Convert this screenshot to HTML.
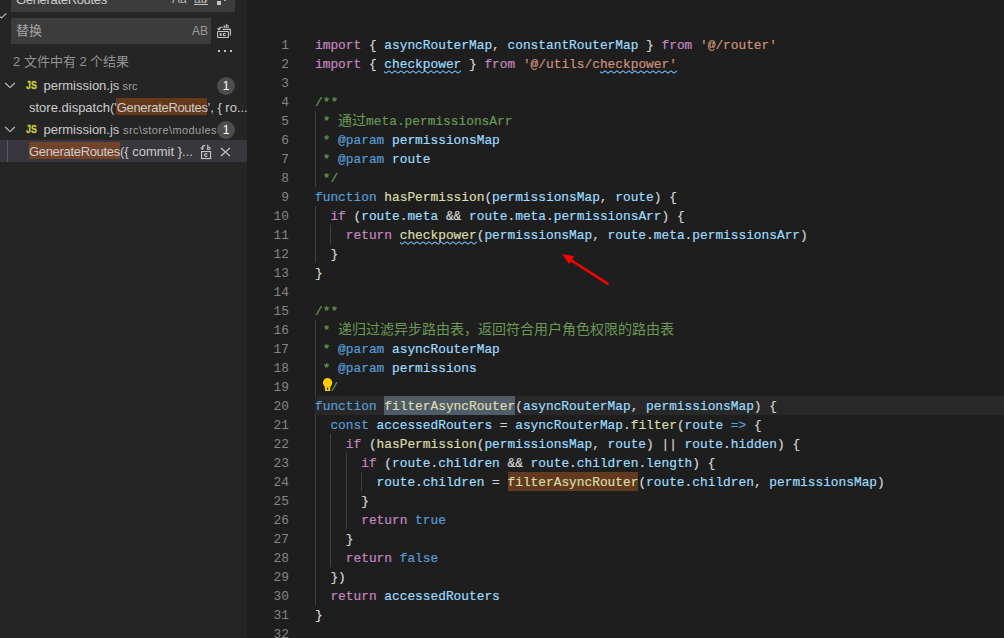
<!DOCTYPE html>
<html lang="zh-CN"><head><meta charset="utf-8"><style>
*{margin:0;padding:0;box-sizing:border-box}
html,body{width:1004px;height:638px;overflow:hidden;background:#1e1e1e}
body{position:relative;font-family:"Liberation Sans",sans-serif}
#side{position:absolute;left:0;top:0;width:247px;height:638px;background:#252526;overflow:hidden}
.ab{position:absolute}
.code{position:absolute;left:0;top:0;width:1004px;height:638px}
.ln{position:absolute;left:247px;width:42px;text-align:right;color:#858585;font-family:"Liberation Mono",monospace;font-size:12.83px;line-height:19px;height:19px;white-space:pre}
.cl{position:absolute;left:315px;-webkit-text-stroke-width:0.2px;font-family:"Liberation Mono",monospace;font-size:12.83px;line-height:19px;height:19px;white-space:pre}
.ig{position:absolute;width:1px;background:#404040;height:19px}
.cjk{font-size:14px;-webkit-text-stroke-width:0}
.hl2,.hl4{letter-spacing:-0.32px}
.st{font-size:13px;color:#cccccc;white-space:pre;line-height:22px;height:22px}
</style></head><body>

<div class="code">
<div class="ab" style="left:315px;top:396px;width:689px;height:19px;background:#282828"></div>
<div class="ab" style="left:384.30px;top:396px;width:130.90px;height:19px;background:#515c6a"></div>
<div class="ab" style="left:507.50px;top:472px;width:130.90px;height:19px;background:#613a1f"></div>
<div class="ig" style="left:315px;top:111px"></div>
<div class="ig" style="left:315px;top:130px"></div>
<div class="ig" style="left:315px;top:149px"></div>
<div class="ig" style="left:315px;top:168px"></div>
<div class="ig" style="left:315px;top:206px"></div>
<div class="ig" style="left:315px;top:225px"></div>
<div class="ig" style="left:315px;top:244px"></div>
<div class="ig" style="left:330px;top:225px"></div>
<div class="ig" style="left:315px;top:320px"></div>
<div class="ig" style="left:315px;top:339px"></div>
<div class="ig" style="left:315px;top:358px"></div>
<div class="ig" style="left:315px;top:377px"></div>
<div class="ig" style="left:315px;top:415px"></div>
<div class="ig" style="left:315px;top:434px"></div>
<div class="ig" style="left:315px;top:453px"></div>
<div class="ig" style="left:315px;top:472px"></div>
<div class="ig" style="left:315px;top:491px"></div>
<div class="ig" style="left:315px;top:510px"></div>
<div class="ig" style="left:315px;top:529px"></div>
<div class="ig" style="left:315px;top:548px"></div>
<div class="ig" style="left:315px;top:567px"></div>
<div class="ig" style="left:315px;top:586px"></div>
<div class="ig" style="left:330px;top:434px"></div>
<div class="ig" style="left:330px;top:453px"></div>
<div class="ig" style="left:330px;top:472px"></div>
<div class="ig" style="left:330px;top:491px"></div>
<div class="ig" style="left:330px;top:510px"></div>
<div class="ig" style="left:330px;top:529px"></div>
<div class="ig" style="left:330px;top:548px"></div>
<div class="ig" style="left:346px;top:453px"></div>
<div class="ig" style="left:346px;top:472px"></div>
<div class="ig" style="left:346px;top:491px"></div>
<div class="ig" style="left:346px;top:510px"></div>
<div class="ig" style="left:361px;top:472px"></div>
<div class="ln" style="top:36px">1</div>
<div class="ln" style="top:55px">2</div>
<div class="ln" style="top:74px">3</div>
<div class="ln" style="top:93px">4</div>
<div class="ln" style="top:112px">5</div>
<div class="ln" style="top:131px">6</div>
<div class="ln" style="top:150px">7</div>
<div class="ln" style="top:169px">8</div>
<div class="ln" style="top:188px">9</div>
<div class="ln" style="top:207px">10</div>
<div class="ln" style="top:226px">11</div>
<div class="ln" style="top:245px">12</div>
<div class="ln" style="top:264px">13</div>
<div class="ln" style="top:283px">14</div>
<div class="ln" style="top:302px">15</div>
<div class="ln" style="top:321px">16</div>
<div class="ln" style="top:340px">17</div>
<div class="ln" style="top:359px">18</div>
<div class="ln" style="top:378px">19</div>
<div class="ln" style="top:397px">20</div>
<div class="ln" style="top:416px">21</div>
<div class="ln" style="top:435px">22</div>
<div class="ln" style="top:454px">23</div>
<div class="ln" style="top:473px">24</div>
<div class="ln" style="top:492px">25</div>
<div class="ln" style="top:511px">26</div>
<div class="ln" style="top:530px">27</div>
<div class="ln" style="top:549px">28</div>
<div class="ln" style="top:568px">29</div>
<div class="ln" style="top:587px">30</div>
<div class="ln" style="top:606px">31</div>
<div class="ln" style="top:625px">32</div>
<div class="cl" style="top:36px"><span style="color:#C586C0">import</span><span style="color:#D4D4D4"> { </span><span style="color:#9CDCFE">asyncRouterMap</span><span style="color:#D4D4D4">, </span><span style="color:#9CDCFE">constantRouterMap</span><span style="color:#D4D4D4"> } </span><span style="color:#C586C0">from</span><span style="color:#D4D4D4"> </span><span style="color:#CE9178">&#x27;@/router&#x27;</span></div>
<div class="cl" style="top:55px"><span style="color:#C586C0">import</span><span style="color:#D4D4D4"> { </span><span style="color:#9CDCFE">checkpower</span><span style="color:#D4D4D4"> } </span><span style="color:#C586C0">from</span><span style="color:#D4D4D4"> </span><span style="color:#CE9178">&#x27;@/utils/checkpower&#x27;</span></div>
<div class="cl" style="top:93px"><span style="color:#6A9955">/**</span></div>
<div class="cl" style="top:112px"><span style="color:#6A9955"> * </span><span class="cjk" style="color:#6A9955">通过</span><span style="color:#6A9955">meta.permissionsArr</span></div>
<div class="cl" style="top:131px"><span style="color:#6A9955"> * </span><span style="color:#569CD6">@param</span><span style="color:#6A9955"> </span><span style="color:#9CDCFE">permissionsMap</span></div>
<div class="cl" style="top:150px"><span style="color:#6A9955"> * </span><span style="color:#569CD6">@param</span><span style="color:#6A9955"> </span><span style="color:#9CDCFE">route</span></div>
<div class="cl" style="top:169px"><span style="color:#6A9955"> */</span></div>
<div class="cl" style="top:188px"><span style="color:#569CD6">function</span><span style="color:#D4D4D4"> </span><span style="color:#DCDCAA">hasPermission</span><span style="color:#D4D4D4">(</span><span style="color:#9CDCFE">permissionsMap</span><span style="color:#D4D4D4">, </span><span style="color:#9CDCFE">route</span><span style="color:#D4D4D4">) {</span></div>
<div class="cl" style="top:207px"><span style="color:#D4D4D4">  </span><span style="color:#C586C0">if</span><span style="color:#D4D4D4"> (</span><span style="color:#9CDCFE">route</span><span style="color:#D4D4D4">.</span><span style="color:#9CDCFE">meta</span><span style="color:#D4D4D4"> &amp;&amp; </span><span style="color:#9CDCFE">route</span><span style="color:#D4D4D4">.</span><span style="color:#9CDCFE">meta</span><span style="color:#D4D4D4">.</span><span style="color:#9CDCFE">permissionsArr</span><span style="color:#D4D4D4">) {</span></div>
<div class="cl" style="top:226px"><span style="color:#D4D4D4">    </span><span style="color:#C586C0">return</span><span style="color:#D4D4D4"> </span><span style="color:#DCDCAA">checkpower</span><span style="color:#D4D4D4">(</span><span style="color:#9CDCFE">permissionsMap</span><span style="color:#D4D4D4">, </span><span style="color:#9CDCFE">route</span><span style="color:#D4D4D4">.</span><span style="color:#9CDCFE">meta</span><span style="color:#D4D4D4">.</span><span style="color:#9CDCFE">permissionsArr</span><span style="color:#D4D4D4">)</span></div>
<div class="cl" style="top:245px"><span style="color:#D4D4D4">  }</span></div>
<div class="cl" style="top:264px"><span style="color:#D4D4D4">}</span></div>
<div class="cl" style="top:302px"><span style="color:#6A9955">/**</span></div>
<div class="cl" style="top:321px"><span style="color:#6A9955"> * </span><span class="cjk" style="color:#6A9955">递归过滤异步路由表，返回符合用户角色权限的路由表</span></div>
<div class="cl" style="top:340px"><span style="color:#6A9955"> * </span><span style="color:#569CD6">@param</span><span style="color:#6A9955"> </span><span style="color:#9CDCFE">asyncRouterMap</span></div>
<div class="cl" style="top:359px"><span style="color:#6A9955"> * </span><span style="color:#569CD6">@param</span><span style="color:#6A9955"> </span><span style="color:#9CDCFE">permissions</span></div>
<div class="cl" style="top:378px"><span style="color:#6A9955">  /</span></div>
<div class="cl" style="top:397px"><span style="color:#569CD6">function</span><span style="color:#D4D4D4"> </span><span style="color:#DCDCAA">filterAsyncRouter</span><span style="color:#D4D4D4">(</span><span style="color:#9CDCFE">asyncRouterMap</span><span style="color:#D4D4D4">, </span><span style="color:#9CDCFE">permissionsMap</span><span style="color:#D4D4D4">) {</span></div>
<div class="cl" style="top:416px"><span style="color:#D4D4D4">  </span><span style="color:#569CD6">const</span><span style="color:#D4D4D4"> </span><span style="color:#9CDCFE">accessedRouters</span><span style="color:#D4D4D4"> = </span><span style="color:#9CDCFE">asyncRouterMap</span><span style="color:#D4D4D4">.</span><span style="color:#DCDCAA">filter</span><span style="color:#D4D4D4">(</span><span style="color:#9CDCFE">route</span><span style="color:#D4D4D4"> </span><span style="color:#569CD6">=&gt;</span><span style="color:#D4D4D4"> {</span></div>
<div class="cl" style="top:435px"><span style="color:#D4D4D4">    </span><span style="color:#C586C0">if</span><span style="color:#D4D4D4"> (</span><span style="color:#DCDCAA">hasPermission</span><span style="color:#D4D4D4">(</span><span style="color:#9CDCFE">permissionsMap</span><span style="color:#D4D4D4">, </span><span style="color:#9CDCFE">route</span><span style="color:#D4D4D4">) || </span><span style="color:#9CDCFE">route</span><span style="color:#D4D4D4">.</span><span style="color:#9CDCFE">hidden</span><span style="color:#D4D4D4">) {</span></div>
<div class="cl" style="top:454px"><span style="color:#D4D4D4">      </span><span style="color:#C586C0">if</span><span style="color:#D4D4D4"> (</span><span style="color:#9CDCFE">route</span><span style="color:#D4D4D4">.</span><span style="color:#9CDCFE">children</span><span style="color:#D4D4D4"> &amp;&amp; </span><span style="color:#9CDCFE">route</span><span style="color:#D4D4D4">.</span><span style="color:#9CDCFE">children</span><span style="color:#D4D4D4">.</span><span style="color:#9CDCFE">length</span><span style="color:#D4D4D4">) {</span></div>
<div class="cl" style="top:473px"><span style="color:#D4D4D4">        </span><span style="color:#9CDCFE">route</span><span style="color:#D4D4D4">.</span><span style="color:#9CDCFE">children</span><span style="color:#D4D4D4"> = </span><span style="color:#DCDCAA">filterAsyncRouter</span><span style="color:#D4D4D4">(</span><span style="color:#9CDCFE">route</span><span style="color:#D4D4D4">.</span><span style="color:#9CDCFE">children</span><span style="color:#D4D4D4">, </span><span style="color:#9CDCFE">permissionsMap</span><span style="color:#D4D4D4">)</span></div>
<div class="cl" style="top:492px"><span style="color:#D4D4D4">      }</span></div>
<div class="cl" style="top:511px"><span style="color:#D4D4D4">      </span><span style="color:#C586C0">return</span><span style="color:#D4D4D4"> </span><span style="color:#569CD6">true</span></div>
<div class="cl" style="top:530px"><span style="color:#D4D4D4">    }</span></div>
<div class="cl" style="top:549px"><span style="color:#D4D4D4">    </span><span style="color:#C586C0">return</span><span style="color:#D4D4D4"> </span><span style="color:#569CD6">false</span></div>
<div class="cl" style="top:568px"><span style="color:#D4D4D4">  })</span></div>
<div class="cl" style="top:587px"><span style="color:#D4D4D4">  </span><span style="color:#C586C0">return</span><span style="color:#D4D4D4"> </span><span style="color:#9CDCFE">accessedRouters</span></div>
<div class="cl" style="top:606px"><span style="color:#D4D4D4">}</span></div>
</div>

<div id="side">
  <!-- top search input (cut off) -->
  <div class="ab" style="left:11px;top:-14px;width:224px;height:26px;background:#3c3c3c"></div>
  <div class="ab st" id="t_gen" style="left:16px;top:-11px;color:#cccccc;letter-spacing:-0.32px">GenerateRoutes</div>
  <div class="ab st" id="t_aa" style="left:172px;top:-12px;color:#b8b8b8;font-size:12px">Aa</div>
  <div class="ab st" id="t_abl" style="left:194px;top:-12px;color:#b8b8b8;font-size:12px">ab</div>
  <div class="ab" style="left:194px;top:4px;width:14px;height:1px;background:#c5c5c5"></div>
  <div class="ab" style="left:217px;top:1px;width:4px;height:4px;background:#c5c5c5"></div>
  <div class="ab" style="left:224px;top:0px;width:2px;height:1px;background:#a8a8a8"></div>
  <div class="ab" style="left:205px;top:0px;width:1px;height:3px;background:#b8b8b8"></div>
  <!-- toggle check -->
  <svg class="ab" style="left:0;top:11px" width="8" height="8" viewBox="0 0 8 8"><path d="M-1 5.2 L1.6 6.8 L6.3 2.3" fill="none" stroke="#c5c5c5" stroke-width="1.1"/></svg>
  <!-- replace input -->
  <div class="ab" style="left:11px;top:18px;width:200px;height:26px;background:#3c3c3c"></div>
  <div class="ab st" id="t_rep" style="left:16px;top:20px;color:#a6a6a6">替换</div>
  <div class="ab st" id="t_AB" style="left:192px;top:20px;color:#9a9a9a;font-size:12px">AB</div>
  <!-- replace all icon -->
  <svg class="ab" style="left:214px;top:22px" width="20" height="18" viewBox="0 0 20 18">
    <g fill="none" stroke="#c5c5c5" stroke-width="1.1">
      <rect x="3.6" y="9.5" width="10.8" height="6" rx="0.6"/>
      <path d="M8.5 7.4 H16.4 V13.6"/>
      <path d="M8.8 5.2 H6.6 Q5 5.2 5 7.2"/>
      <path d="M3.5 6.2 L5 7.9 L6.5 6.2"/>
    </g>
    <g fill="#c5c5c5">
      <rect x="5.8" y="11" width="1.8" height="3"/>
      <rect x="9" y="11" width="2.8" height="1"/>
      <rect x="9" y="13" width="2.8" height="1"/>
      <rect x="9" y="11" width="1" height="3"/>
      <rect x="9.6" y="3.4" width="1.8" height="2.4"/>
      <rect x="12.2" y="1.8" width="1" height="4"/>
      <rect x="12.2" y="3.4" width="2.6" height="2.4"/>
    </g>
    <rect x="13.2" y="4.1" width="0.9" height="1.1" fill="#252526"/>
  </svg>
  <!-- more dots -->
  <div class="ab" style="left:218px;top:50px;width:2px;height:2px;background:#c5c5c5"></div>
  <div class="ab" style="left:224px;top:50px;width:2px;height:2px;background:#c5c5c5"></div>
  <div class="ab" style="left:230px;top:50px;width:2px;height:2px;background:#c5c5c5"></div>
  <!-- results message -->
  <div class="ab st" id="t_msg" style="left:13px;top:51px;color:#939393">2 文件中有 2 个结果</div>
  <!-- row 1 -->
  <svg class="ab" style="left:4px;top:80px" width="12" height="10" viewBox="0 0 12 10"><path d="M1.2 3 L6 7.6 L10.8 3" fill="none" stroke="#c5c5c5" stroke-width="1.1"/></svg>
  <div class="ab st" id="t_js1" style="left:26px;top:73.5px;color:#cbcb41;font-weight:bold;font-size:11px;letter-spacing:0px;-webkit-text-stroke:0.3px #cbcb41;transform:scaleX(0.8);transform-origin:0 0">JS</div>
  <div class="ab st" id="t_perm1" style="left:43.5px;top:75px">permission.js</div>
  <div class="ab st" id="t_src1" style="left:122.5px;top:75px;color:#a0a0a0;font-size:11px;letter-spacing:0.2px">src</div>
  <div class="ab" style="left:217px;top:77px;width:18px;height:18px;border-radius:9px;background:#4d4d4d"></div>
  <div class="ab st" id="t_b1" style="left:222px;top:75px;color:#ffffff;font-size:12px;width:8px;text-align:center">1</div>
  <!-- row 2 -->
  <div class="ab" style="left:116px;top:98px;width:91px;height:17px;background:#653a1b"></div>
  <div class="ab st" id="t_row2" style="left:29px;top:97px">store.dispatch('<span class="hl2">GenerateRoutes</span>', { ro...</div>
  <!-- row 3 -->
  <svg class="ab" style="left:4px;top:124px" width="12" height="10" viewBox="0 0 12 10"><path d="M1.2 3 L6 7.6 L10.8 3" fill="none" stroke="#c5c5c5" stroke-width="1.1"/></svg>
  <div class="ab st" id="t_js2" style="left:26px;top:117.5px;color:#cbcb41;font-weight:bold;font-size:11px;letter-spacing:0px;-webkit-text-stroke:0.3px #cbcb41;transform:scaleX(0.8);transform-origin:0 0">JS</div>
  <div class="ab st" id="t_perm2" style="left:43.5px;top:119px">permission.js</div>
  <div class="ab st" id="t_src2" style="left:123px;top:119px;color:#a0a0a0;font-size:11px;letter-spacing:0.42px">src\store\modules</div>
  <div class="ab" style="left:217px;top:121px;width:18px;height:18px;border-radius:9px;background:#4d4d4d"></div>
  <div class="ab st" id="t_b2" style="left:222px;top:119px;color:#ffffff;font-size:12px;width:8px;text-align:center">1</div>
  <!-- row 4 selected -->
  <div class="ab" style="left:0;top:140px;width:247px;height:22px;background:#37373d"></div>
  <div class="ab" style="left:7px;top:140px;width:1px;height:22px;background:#585858"></div>
  <div class="ab" style="left:29px;top:142px;width:91px;height:17px;background:#72432a"></div>
  <div class="ab st" id="t_row4" style="left:29px;top:141px"><span class="hl4">GenerateRoutes</span>({ commit }...</div>
  <!-- replace icon -->
  <svg class="ab" style="left:199px;top:143px" width="14" height="18" viewBox="0 0 14 18">
    <g fill="none" stroke="#c5c5c5" stroke-width="1.1">
      <rect x="2.55" y="8.55" width="9" height="7"/>
      <path d="M6.3 2.6 H5 Q3.2 2.6 3.2 4.8 V5.6"/>
      <path d="M1.8 4.6 L3.2 6.3 L4.6 4.6"/>
      <path d="M8.4 10.9 H6.8 Q5.5 10.9 5.5 12.1 Q5.5 13.3 6.8 13.3 H8.4" stroke-width="1.2"/>
    </g>
    <g fill="#c5c5c5">
      <rect x="8.2" y="1.6" width="1.1" height="5.2"/>
      <rect x="8.2" y="3.8" width="3.2" height="3"/>

    </g>
    <rect x="9.3" y="4.7" width="1.1" height="1.2" fill="#37373d"/>
  </svg>
  <svg class="ab" style="left:220px;top:147px" width="11" height="10" viewBox="0 0 11 10"><path d="M1 1 L10 9 M10 1 L1 9" fill="none" stroke="#c5c5c5" stroke-width="1.1"/></svg>
</div>
<svg class="ab" style="left:316px;top:377px" width="18" height="19" viewBox="0 0 18 19">
<circle cx="11.6" cy="5.7" r="4.7" fill="#ffcc00"/>
<path d="M8.6 8.5 H14.6 L14.1 13.9 H9.1 Z" fill="#ffcc00"/>
<rect x="10.9" y="10.6" width="1.3" height="2.1" fill="#1e1e1e"/>
</svg>
<svg class="ab" style="left:384.30px;top:70px;overflow:hidden" width="77.00" height="4" viewBox="0 0 77.00 4"><path d="M-1 1 c1.5 0 1.5 2 3 2 c1.5 0 1.5 -2 3 -2 c1.5 0 1.5 2 3 2 c1.5 0 1.5 -2 3 -2 c1.5 0 1.5 2 3 2 c1.5 0 1.5 -2 3 -2 c1.5 0 1.5 2 3 2 c1.5 0 1.5 -2 3 -2 c1.5 0 1.5 2 3 2 c1.5 0 1.5 -2 3 -2 c1.5 0 1.5 2 3 2 c1.5 0 1.5 -2 3 -2 c1.5 0 1.5 2 3 2 c1.5 0 1.5 -2 3 -2 c1.5 0 1.5 2 3 2 c1.5 0 1.5 -2 3 -2 c1.5 0 1.5 2 3 2 c1.5 0 1.5 -2 3 -2 c1.5 0 1.5 2 3 2 c1.5 0 1.5 -2 3 -2 c1.5 0 1.5 2 3 2 c1.5 0 1.5 -2 3 -2 c1.5 0 1.5 2 3 2 c1.5 0 1.5 -2 3 -2 c1.5 0 1.5 2 3 2 c1.5 0 1.5 -2 3 -2 c1.5 0 1.5 2 3 2 c1.5 0 1.5 -2 3 -2" fill="none" stroke="#75beff" stroke-width="1.1"/></svg>
<svg class="ab" style="left:599.90px;top:70px;overflow:hidden" width="77.00" height="4" viewBox="0 0 77.00 4"><path d="M-1 1 c1.5 0 1.5 2 3 2 c1.5 0 1.5 -2 3 -2 c1.5 0 1.5 2 3 2 c1.5 0 1.5 -2 3 -2 c1.5 0 1.5 2 3 2 c1.5 0 1.5 -2 3 -2 c1.5 0 1.5 2 3 2 c1.5 0 1.5 -2 3 -2 c1.5 0 1.5 2 3 2 c1.5 0 1.5 -2 3 -2 c1.5 0 1.5 2 3 2 c1.5 0 1.5 -2 3 -2 c1.5 0 1.5 2 3 2 c1.5 0 1.5 -2 3 -2 c1.5 0 1.5 2 3 2 c1.5 0 1.5 -2 3 -2 c1.5 0 1.5 2 3 2 c1.5 0 1.5 -2 3 -2 c1.5 0 1.5 2 3 2 c1.5 0 1.5 -2 3 -2 c1.5 0 1.5 2 3 2 c1.5 0 1.5 -2 3 -2 c1.5 0 1.5 2 3 2 c1.5 0 1.5 -2 3 -2 c1.5 0 1.5 2 3 2 c1.5 0 1.5 -2 3 -2 c1.5 0 1.5 2 3 2 c1.5 0 1.5 -2 3 -2" fill="none" stroke="#75beff" stroke-width="1.1"/></svg>
<svg class="ab" style="left:399.70px;top:241px;overflow:hidden" width="77.00" height="4" viewBox="0 0 77.00 4"><path d="M-1 1 c1.5 0 1.5 2 3 2 c1.5 0 1.5 -2 3 -2 c1.5 0 1.5 2 3 2 c1.5 0 1.5 -2 3 -2 c1.5 0 1.5 2 3 2 c1.5 0 1.5 -2 3 -2 c1.5 0 1.5 2 3 2 c1.5 0 1.5 -2 3 -2 c1.5 0 1.5 2 3 2 c1.5 0 1.5 -2 3 -2 c1.5 0 1.5 2 3 2 c1.5 0 1.5 -2 3 -2 c1.5 0 1.5 2 3 2 c1.5 0 1.5 -2 3 -2 c1.5 0 1.5 2 3 2 c1.5 0 1.5 -2 3 -2 c1.5 0 1.5 2 3 2 c1.5 0 1.5 -2 3 -2 c1.5 0 1.5 2 3 2 c1.5 0 1.5 -2 3 -2 c1.5 0 1.5 2 3 2 c1.5 0 1.5 -2 3 -2 c1.5 0 1.5 2 3 2 c1.5 0 1.5 -2 3 -2 c1.5 0 1.5 2 3 2 c1.5 0 1.5 -2 3 -2 c1.5 0 1.5 2 3 2 c1.5 0 1.5 -2 3 -2" fill="none" stroke="#75beff" stroke-width="1.1"/></svg>
<svg class="ab" style="left:0;top:0" width="1004" height="638" viewBox="0 0 1004 638">
<line x1="607.6" y1="283.6" x2="569" y2="259" stroke="#ff0000" stroke-width="2.6" stroke-linecap="round"/>
<path d="M562.2 254.1 L574.2 256.3 L569.2 264.0 Z" fill="#ff0000"/>
</svg>
</body></html>
